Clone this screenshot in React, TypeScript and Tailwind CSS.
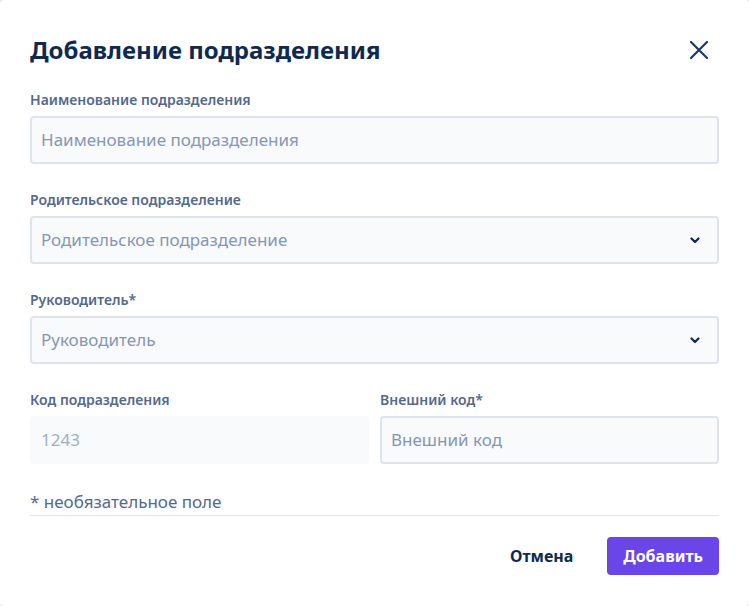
import React from "react";

const Chevron = () => (
  <svg width="10" height="7" viewBox="0 0 10 7" className="shrink-0">
    <path d="M1.5 1.5 L5 5 L8.5 1.5" fill="none" stroke="#0f2a4f" strokeWidth="2.2" strokeLinecap="round" strokeLinejoin="round" />
  </svg>
);

function Label({ children }: { children: React.ReactNode }) {
  return <div className="text-[14px] leading-[20px] font-semibold text-[#55698a] mb-[6px]">{children}</div>;
}

function Field({ label, placeholder, select }: { label: string; placeholder: string; select?: boolean }) {
  return (
    <div className="flex flex-col">
      <Label>{label}</Label>
      <div className="h-[48px] rounded-[4px] border-2 border-[#dfe4eb] bg-[#f8fafc] flex items-center pl-[9px] pr-[17px] justify-between">
        <span className="text-[17px] text-[#8797b0]">{placeholder}</span>
        {select && <Chevron />}
      </div>
    </div>
  );
}

export default function App() {
  return (
    <div className="w-[749px] h-[606px] bg-[#e5e7eb]" style={{ fontFamily: '"Noto Sans", "Open Sans", sans-serif' }}>
      <div className="w-full h-full bg-white rounded-[4px] px-[30px] pt-[34px] flex flex-col">
        <div className="flex items-center justify-between h-[32px]">
          <h1 className="text-[24px] leading-[32px] font-bold text-[#0f2a4f]">Добавление подразделения</h1>
          <svg width="20" height="20" viewBox="0 0 20 20" className="mr-[10px]">
            <path d="M2 2 L18 18 M18 2 L2 18" stroke="#1b3a63" strokeWidth="2.2" strokeLinecap="round" />
          </svg>
        </div>
        <div className="mt-[24px] flex flex-col gap-[26px]">
          <Field label="Наименование подразделения" placeholder="Наименование подразделения" />
          <Field label="Родительское подразделение" placeholder="Родительское подразделение" select />
          <Field label="Руководитель*" placeholder="Руководитель" select />
          <div className="grid grid-cols-2 gap-[11px]">
            <div className="flex flex-col">
              <Label>Код подразделения</Label>
              <div className="h-[48px] rounded-[4px] bg-[#f8fafc] flex items-center pl-[11px]">
                <span className="text-[17px] text-[#a3afc0]">1243</span>
              </div>
            </div>
            <Field label="Внешний код*" placeholder="Внешний код" />
          </div>
        </div>
        <div className="mt-[28px] text-[17px] leading-[20px] text-[#55698a] pb-[3px] border-b border-[#e3e5e8]">* необязательное поле</div>
        <div className="mt-[21px] flex items-center justify-end gap-[34px]">
          <button className="text-[16px] font-bold text-[#0f2a4f]">Отмена</button>
          <button className="h-[38px] px-[16px] rounded-[4px] bg-[#6a45e8] text-white text-[16px] font-bold">Добавить</button>
        </div>
      </div>
    </div>
  );
}
